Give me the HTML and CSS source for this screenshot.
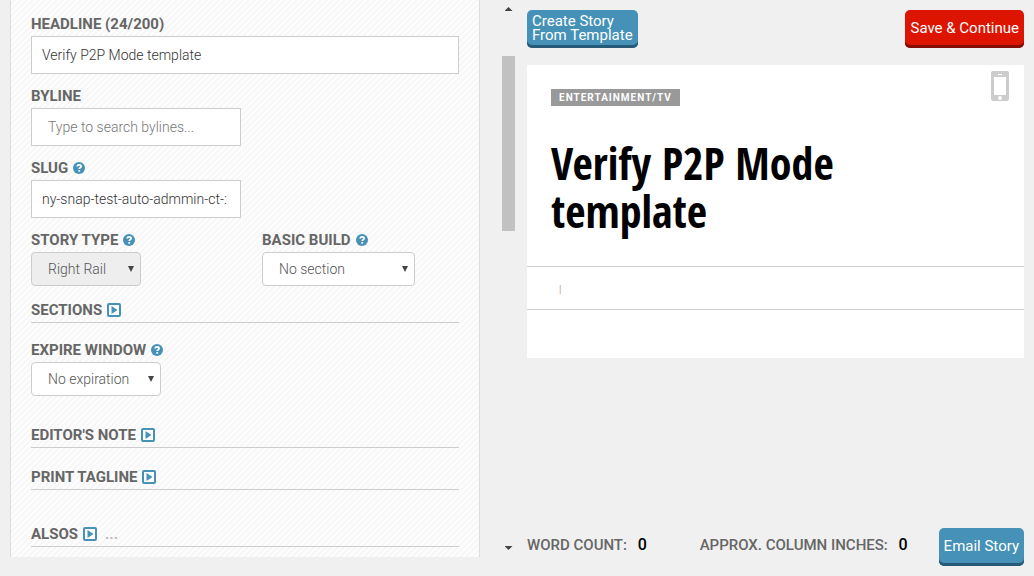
FILE: index.html
```
<!DOCTYPE html>
<html lang="en">
<head>
<meta charset="utf-8">
<meta name="viewport" content="width=device-width, initial-scale=1">
<title>Story editor</title>
<link rel="stylesheet" href="styles.css">
</head>
<body>
<svg class="sprite" aria-hidden="true">
  <symbol id="help" viewBox="0 0 12 12">
    <circle cx="6" cy="6" r="6" fill="#4591b8"/>
    <path d="M4.1 4.5C4.2 3.3 5 2.8 6.1 2.8c1.200 0 2 .6 2 1.600 0 1.400-1.900 1.400-1.900 2.700" fill="none" stroke="#fff" stroke-width="1.700"/>
    <rect x="5.300" y="8" width="1.800" height="1.700" fill="#fff"/>
  </symbol>
  <symbol id="expand" viewBox="0 0 14 14">
    <rect x="1" y="1" width="12" height="12" rx="1" fill="#fff" stroke="#4591b8" stroke-width="2"/>
    <path d="M4.500 3v8L10.500 7z" fill="#4591b8"/>
  </symbol>
</svg>
<div class="app">
  <form class="pane">
    <div class="field">
      <label class="label" for="headline">HEADLINE (24/200)</label>
      <input class="input" id="headline" type="text" value="Verify P2P Mode template">
    </div>
    <div class="field">
      <label class="label" for="byline">BYLINE</label>
      <input class="input input-short input-search" id="byline" type="text" placeholder="Type to search bylines...">
    </div>
    <div class="field">
      <label class="label" for="slug">SLUG <svg class="help"><use href="#help"/></svg></label>
      <input class="input input-short" id="slug" type="text" value="ny-snap-test-auto-admmin-ct-:">
    </div>
    <div class="field field-pair">
      <div>
        <label class="label" for="type">STORY TYPE <svg class="help"><use href="#help"/></svg></label>
        <span class="select select-type"><select id="type" disabled><option>Right Rail</option></select></span>
      </div>
      <div>
        <label class="label" for="build">BASIC BUILD <svg class="help"><use href="#help"/></svg></label>
        <span class="select select-build"><select id="build"><option>No section</option></select></span>
      </div>
    </div>
    <div class="section"><span class="label">SECTIONS</span><button type="button" class="expand" aria-label="Expand sections"><svg><use href="#expand"/></svg></button></div>
    <div class="field field-expire">
      <label class="label" for="expire">EXPIRE WINDOW <svg class="help"><use href="#help"/></svg></label>
      <span class="select select-expire"><select id="expire"><option>No expiration</option></select></span>
    </div>
    <div class="section section-note"><span class="label">EDITOR'S NOTE</span><button type="button" class="expand" aria-label="Expand editor's note"><svg><use href="#expand"/></svg></button></div>
    <div class="section section-tagline"><span class="label">PRINT TAGLINE</span><button type="button" class="expand" aria-label="Expand print tagline"><svg><use href="#expand"/></svg></button></div>
    <div class="section section-alsos"><span class="label">ALSOS</span><button type="button" class="expand" aria-label="Expand alsos"><svg><use href="#expand"/></svg></button><span class="more">...</span></div>
  </form>
  <div class="scrollbar" aria-hidden="true">
    <span class="arrow arrow-up"></span>
    <span class="thumb"></span>
    <span class="arrow arrow-down"></span>
  </div>
  <main class="main">
    <div class="toolbar">
      <button type="button" class="button">Create Story<br>From Template</button>
      <button type="button" class="button button-save">Save &amp; Continue</button>
    </div>
    <article class="preview">
      <header class="preview-head">
        <span class="badge">ENTERTAINMENT/TV</span>
        <svg class="phone" viewBox="0 0 18 30" role="img" aria-label="Mobile preview">
          <path fill="#ccc" fill-rule="evenodd" d="M2 0h14a2 2 0 0 1 2 2v26a2 2 0 0 1-2 2H2a2 2 0 0 1-2-2V2a2 2 0 0 1 2-2zM3 6v18h12V6zM7 3v1h4V3z"/>
          <circle cx="9" cy="27" r="2" fill="#fff"/>
        </svg>
      </header>
      <h1 class="title">Verify P2P Mode template</h1>
      <div class="meta">|</div>
    </article>
    <footer class="footer">
      <span class="stat">WORD COUNT: <b class="count">0</b></span>
      <span class="stat stat-inches">APPROX. COLUMN INCHES: <b class="count">0</b></span>
      <button type="button" class="button">Email Story</button>
    </footer>
  </main>
</div>
</body>
</html>
```
FILE: styles.css
```
* {
  box-sizing: border-box;
}

body {
  margin: 0;
  background: #f0f0f0;
  color: #666;
  font-family: Roboto, "Liberation Sans", sans-serif;
  font-size: 14px;
}

button,
input,
select {
  font: inherit;
}

.sprite {
  display: none;
}

.app {
  display: grid;
  grid-template-columns: minmax(0, 470fr) 47px minmax(0, 497fr);
  min-height: 100vh;
  padding: 0 10px;
}

/* Form pane */
.pane {
  align-self: start;
  padding: 12px 20px 10px;
  border: solid #ddd;
  border-width: 0 1px;
  background: #fdfdfd linear-gradient(135deg, #fdfdfd 25%, #f7f7f7 25% 50%, #fdfdfd 50% 75%, #f7f7f7 75%) 0 0 / 6px 6px;
}

.field {
  margin-bottom: 10px;
}

.field-pair {
  display: grid;
  grid-template-columns: 231fr 197fr;
  margin-bottom: 12px;
}

.field-expire {
  margin: 15px 0 27px;
}

.label {
  display: flex;
  align-items: center;
  gap: 5px;
  font-size: 15px;
  font-weight: 700;
  line-height: 24px;
}

.help {
  width: 12px;
  height: 12px;
}

.input {
  display: block;
  width: 100%;
  height: 38px;
  padding: 0 10px;
  border: 1px solid #ccc;
  background: #fff;
  color: #333;
  font-size: 14px;
  font-weight: 300;
}

.input-short {
  width: 210px;
  max-width: 100%;
}

.input-search {
  padding-left: 16px;
}

.input::placeholder {
  color: #777;
}

.select {
  position: relative;
  display: block;
  max-width: 100%;
}

.select select {
  display: block;
  width: 100%;
  height: 34px;
  padding: 0 16px;
  border: 1px solid #ccc;
  border-radius: 4px;
  background: #fff;
  color: #555;
  font-size: 14px;
  font-weight: 300;
  appearance: none;
}

.select select:disabled {
  background: #eee;
  opacity: 1;
}

.select::after {
  content: "";
  position: absolute;
  top: 14px;
  right: 7px;
  width: 6px;
  height: 6px;
  background: #444;
  clip-path: polygon(0 0, 100% 0, 50% 100%);
}

.select-type {
  width: 110px;
}

.select-build {
  width: 153px;
}

.select-expire {
  width: 130px;
}

.section {
  display: flex;
  align-items: center;
  gap: 5px;
  border-bottom: 1px solid #ccc;
}

.section-note {
  margin-bottom: 17px;
}

.section-tagline {
  margin-bottom: 32px;
}

.expand {
  display: flex;
  padding: 0;
  border: 0;
  background: none;
}

.expand svg {
  width: 14px;
  height: 14px;
}

.more {
  padding-left: 3px;
  color: #bbb;
  font-size: 15px;
  font-weight: 700;
}

/* Scrollbar */
.scrollbar {
  display: flex;
  flex-direction: column;
  align-items: center;
  margin: 0 12px 0 22px;
  padding: 7px 0 26px;
}

.arrow {
  width: 8px;
  height: 4px;
  background: #444;
}

.arrow-up {
  clip-path: polygon(50% 0, 100% 100%, 0 100%);
}

.arrow-down {
  margin-top: auto;
  clip-path: polygon(0 0, 100% 0, 50% 100%);
}

.thumb {
  width: 13px;
  height: 175px;
  margin-top: 45px;
  background: #c1c1c1;
}

/* Preview column */
.main {
  display: flex;
  flex-direction: column;
  padding: 10px 0;
}

.toolbar {
  display: flex;
  justify-content: space-between;
  margin-bottom: 17px;
}

.button {
  height: 38px;
  padding: 0 5px 3px;
  border: 0;
  border-radius: 5px;
  background: #4591b8;
  box-shadow: inset 0 -3px #265a77;
  color: #fff;
  font-size: 15px;
  line-height: 14px;
  text-align: left;
  white-space: nowrap;
}

.button-save {
  background: #dd1500;
  box-shadow: inset 0 -3px #850c00;
}

.preview {
  padding-bottom: 48px;
  background: #fff;
}

.preview-head {
  display: flex;
  align-items: flex-start;
  justify-content: space-between;
  padding: 6px 15px 0 24px;
}

.badge {
  margin-top: 18px;
  padding: 0 8px;
  background: #999;
  color: #fff;
  font-size: 10px;
  font-weight: 700;
  letter-spacing: 1px;
  line-height: 17px;
}

.phone {
  width: 18px;
  height: 30px;
}

.title {
  margin: 0;
  padding: 33px 24px 31px;
  border-bottom: 1px solid #ccc;
  color: #000;
  font-family: "Open Sans Condensed", "Open Sans", sans-serif;
  font-size: 44px;
  font-weight: 700;
  line-height: 48px;
}

.meta {
  padding: 3px 32px 0;
  border-bottom: 1px solid #ccc;
  color: #c99;
  font-size: 10px;
  line-height: 39px;
}

.footer {
  display: flex;
  align-items: center;
  margin-top: auto;
}

.stat {
  padding-bottom: 6px;
  font-size: 15px;
  font-weight: 500;
}

.stat-inches {
  margin: 0 31px 0 auto;
}

.count {
  margin-left: 7px;
  color: #000;
  font-size: 16px;
  font-weight: 500;
}
```
